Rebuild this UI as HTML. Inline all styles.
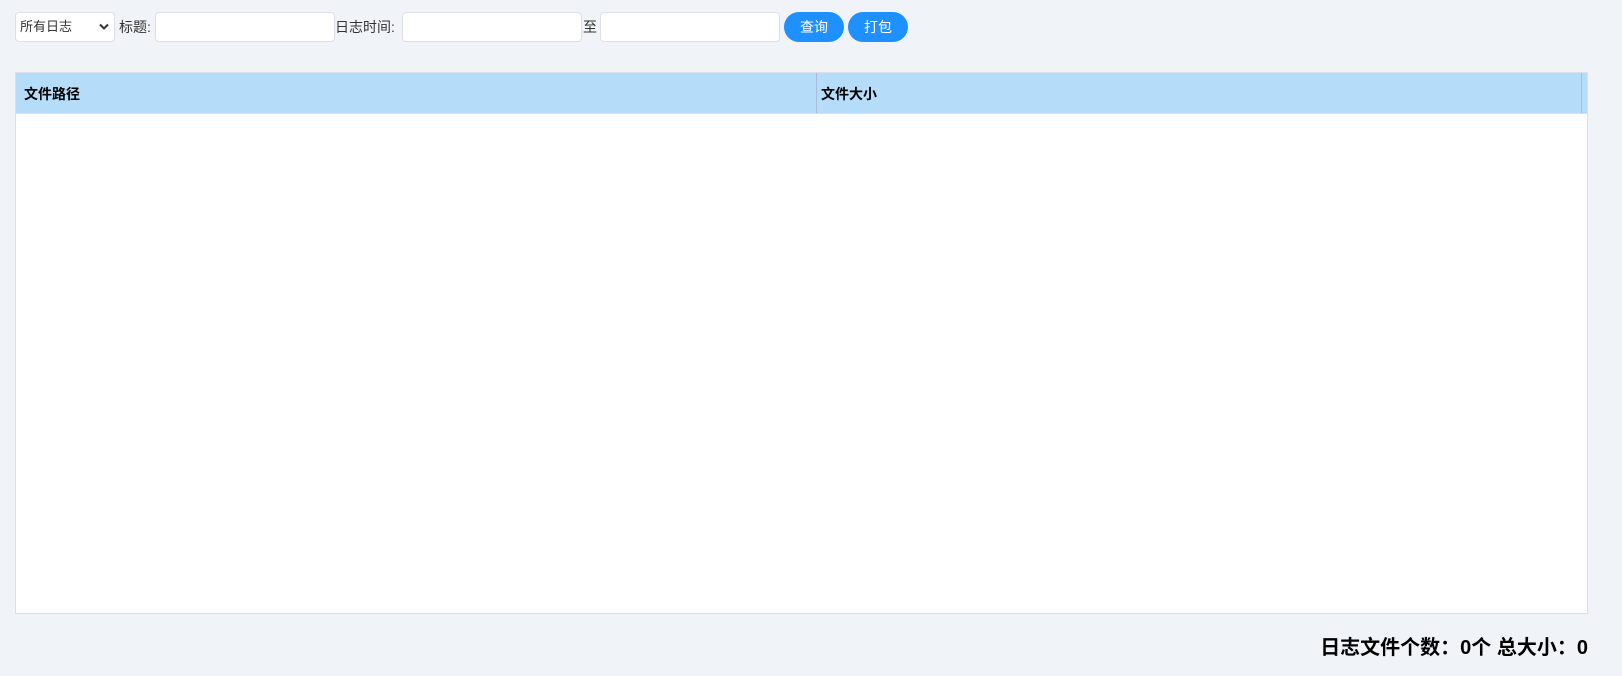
<!DOCTYPE html>
<html lang="zh">
<head>
<meta charset="utf-8">
<title>日志</title>
<style>
html,body{margin:0;padding:0;width:1622px;height:676px;overflow:hidden;background:#f0f3f8;font-family:"Liberation Sans","Noto Sans CJK SC",sans-serif;color:#333;}
.abs{position:absolute;box-sizing:border-box;}
.inp{height:30px;top:12px;width:180px;background:#fff;border:1px solid #dcdfe6;border-radius:4px;}
.lbl{font-size:14px;line-height:30px;top:12px;white-space:nowrap;}
.btn{top:12px;width:60px;height:30px;border-radius:15px;background:#1e90ff;color:#fff;font-size:14px;line-height:30px;text-align:center;}
.sel{left:15px;top:12px;width:100px;height:30px;background:#fff;border:1px solid #dcdfe6;border-radius:4px;font-size:13px;line-height:28px;padding-left:4px;color:#333;}
.th{font-size:14px;font-weight:bold;color:#000;line-height:41px;top:74px;white-space:nowrap;}
</style>
</head>
<body>
<div class="abs sel">所有日志
  <svg style="position:absolute;left:83px;top:10px" width="10" height="8" viewBox="0 0 10 8"><path d="M1 1.5 L5 5.5 L9 1.5" fill="none" stroke="#333" stroke-width="2"/></svg>
</div>
<div class="abs lbl" style="left:119px">标题:</div>
<div class="abs inp" style="left:155px"></div>
<div class="abs lbl" style="left:335px">日志时间:</div>
<div class="abs inp" style="left:402px"></div>
<div class="abs lbl" style="left:583px">至</div>
<div class="abs inp" style="left:600px"></div>
<div class="abs btn" style="left:784px">查询</div>
<div class="abs btn" style="left:848px">打包</div>

<div class="abs" style="left:15px;top:72px;width:1573px;height:542px;background:#fff;border:1px solid #dcdfe6;">
  <div class="abs" style="left:0;top:0;width:1571px;height:41px;background:#b5dcf9;border-bottom:1px solid #dcdfe6;"></div>
  <div class="abs" style="left:800px;top:0;width:1px;height:40px;background:#a9bcdc;"></div>
  <div class="abs" style="left:1565px;top:0;width:1px;height:40px;background:#a9bcdc;"></div>
</div>
<div class="abs th" style="left:24px">文件路径</div>
<div class="abs th" style="left:821px">文件大小</div>

<div class="abs" style="right:34px;top:633px;font-size:20px;font-weight:bold;color:#000;line-height:30px;white-space:nowrap;">日志文件个数：0个 总大小：0</div>
</body>
</html>
